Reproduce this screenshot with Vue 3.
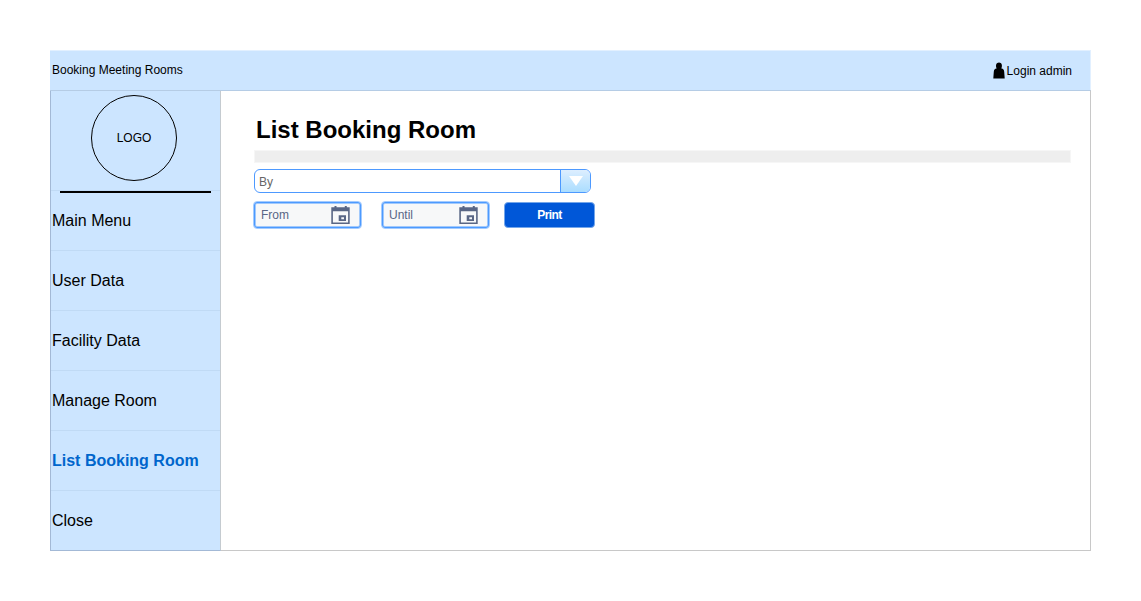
<script setup>
const menu = ['Main Menu', 'User Data', 'Facility Data', 'Manage Room', 'List Booking Room', 'Close']
const active = 'List Booking Room'
const dates = ['From', 'Until']
</script>

<template>
  <div class="page">
    <div class="window">
      <header class="topbar">
        <span class="title">Booking Meeting Rooms</span>
        <span class="login">
          <svg class="user" width="12" height="17" viewBox="0 0 12 17">
            <path d="M3.600 6.500C2.300 3.400 3.300.6 6 .6s3.700 2.800 2.400 5.900c2 .3 2.500 1.100 2.800 3.200L11.700 16.500H.3L.8 9.700c.3-2.100.8-2.900 2.800-3.200z" fill="#000" />
          </svg>
          <span>Login admin</span>
        </span>
      </header>
      <div class="body">
        <nav class="sidebar">
          <div class="brand"><div class="logo">LOGO</div></div>
          <div class="rule"></div>
          <a v-for="item in menu" :key="item" class="item" :class="{ active: item === active }">{{ item }}</a>
        </nav>
        <main class="content">
          <h1>List Booking Room</h1>
          <div class="divider"></div>
          <div class="select">
            <span class="value">By</span>
            <span class="arrow">
              <svg width="14" height="10" viewBox="0 0 14 10"><path d="M0 0H14L7 10z" fill="#fff" /></svg>
            </span>
          </div>
          <div class="filters">
            <div v-for="d in dates" :key="d" class="date">
              <span>{{ d }}</span>
              <svg width="19" height="18" viewBox="0 0 19 18">
                <path fill="#596685" fill-rule="evenodd" d="M.3 1.300H3.500V0H5.500V1.300H13.800V0H15.800V1.300H18.700V18H.3zM1.900 5.300V16.400H17.100V5.300z" />
                <path fill="#596685" fill-rule="evenodd" d="M7.700 9.300H15V15H7.700zM10.300 11.200V13.200H13V11.200z" />
              </svg>
            </div>
            <button class="print">Print</button>
          </div>
        </main>
      </div>
    </div>
  </div>
</template>

<style>
body {
  background: #fff;
}
</style>

<style scoped>
* {
  box-sizing: border-box;
}
.page {
  width: 1141px;
  height: 601px;
  padding: 50px;
  font-family: "Liberation Sans", Arial, sans-serif;
  font-size: 12px;
  color: #000;
  overflow: hidden;
}
.window {
  width: 1041px;
  height: 501px;
}
.topbar {
  height: 40px;
  padding: 0 18px 0 2px;
  display: flex;
  justify-content: space-between;
  align-items: center;
  background: #cce5ff;
  border: 1px solid #e2f0ff;
  border-width: 1px 1px 0 0;
  line-height: 14px;
}
.title {
  padding-bottom: 2px;
}
.login {
  display: flex;
  align-items: center;
  gap: 1.5px;
}
.user {
  display: block;
  margin-top: -1px;
}
.body {
  height: 461px;
  display: flex;
  border: 1px solid #c8c8c8;
  border-top-color: #b5cce5;
  border-left: 0;
}
.sidebar {
  width: 171px;
  height: 460px;
  flex: none;
  background: #cce5ff;
  border-left: 1px solid #a3b9d6;
  border-right: 1px solid #c5cbd0;
  border-bottom: 1px solid #a3b9d6;
}
.brand {
  height: 100px;
  padding-top: 4px;
  border-bottom: 1px solid #c0daf5;
}
.logo {
  width: 86px;
  height: 86px;
  margin-left: 40px;
  border: 1px solid #000;
  border-radius: 50%;
  line-height: 84px;
  text-align: center;
}
.rule {
  width: 151px;
  height: 2px;
  margin: 0 0 -2px 9px;
  background: #000;
}
.item {
  display: block;
  height: 60px;
  padding-left: 1px;
  border-bottom: 1px solid #c0daf5;
  font-size: 16px;
  line-height: 59px;
}
.item:last-child {
  height: 59px;
  border-bottom: 0;
}
.item.active {
  color: #0066cc;
  font-weight: bold;
}
.content {
  flex: 1;
  padding: 25px 19px 0 33px;
}
h1 {
  margin: 0 0 6px 2px;
  font-size: 24px;
  line-height: 28px;
}
.divider {
  height: 13px;
  width: 817px;
  background: #eee;
  border: 1px solid #f6f6f6;
}
.select {
  width: 337px;
  height: 24px;
  margin-top: 6px;
  display: flex;
  border: 1px solid #4d99ff;
  border-radius: 6px;
  overflow: hidden;
}
.value {
  flex: 1;
  padding-left: 4px;
  line-height: 24px;
  color: #666;
}
.arrow {
  width: 30px;
  display: flex;
  align-items: center;
  justify-content: center;
  border-left: 1px solid #4d99ff;
  background: linear-gradient(#ddeeff, #aaddff);
}
.filters {
  display: flex;
  align-items: center;
  gap: 19px;
  margin: 8px 0 0 -1px;
}
.date {
  width: 109px;
  height: 28px;
  padding: 0 11px 0 7px;
  display: flex;
  align-items: center;
  justify-content: space-between;
  background: #f7f8f9;
  border: 1px solid #a3cbff;
  border-radius: 4px;
  box-shadow: inset 0 0 0 1px #4c9aff, inset 0 0 0 2px #a1c9fc;
  color: #596685;
}
.print {
  width: 91px;
  height: 26px;
  margin-left: -5px;
  padding: 0;
  border: 1px solid #74a6ea;
  border-radius: 4px;
  background: #0057d8;
  color: #fff;
  font: bold 12px "Liberation Sans", Arial, sans-serif;
  letter-spacing: -0.6px;
}
</style>
